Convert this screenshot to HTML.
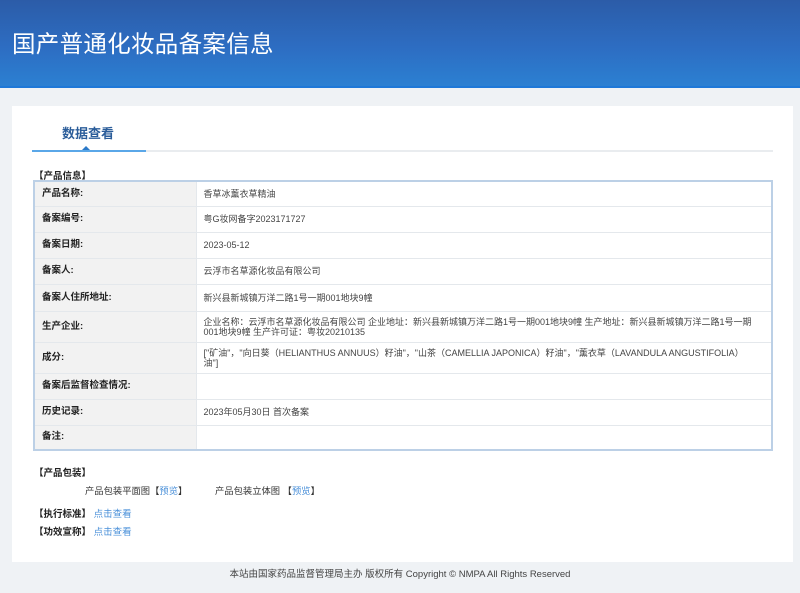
<!DOCTYPE html>
<html><head><meta charset="utf-8"><style>
*{margin:0;padding:0;box-sizing:border-box}
body{width:800px;height:593px;background:#eff2f5;font-family:"Liberation Sans","Noto Sans CJK SC",sans-serif;font-size:9px;color:#333;position:relative;overflow:hidden}
.hd{position:absolute;left:0;top:0;width:800px;height:88px;background:linear-gradient(180deg,#2c5ca8 0%,#2d6dc2 55%,#2c80d2 100%);border-bottom:2px solid #1e78d8}
.hd h1{position:absolute;left:12px;top:25px;font-size:23.5px;font-weight:normal;color:#fff;letter-spacing:0.3px}
.panel{position:absolute;left:12px;top:106px;width:781px;height:456px;background:#fff}
.tab{position:absolute;left:62px;top:123px;font-size:13px;font-weight:bold;color:#2b5d9a}
.tl{position:absolute;left:32px;top:150px;width:741px;height:2px;background:#e9ecef}
.tla{position:absolute;left:32px;top:150px;width:114px;height:2px;background:#5aa7e8}
.tri{position:absolute;left:82px;top:146px;width:0;height:0;border-left:4px solid transparent;border-right:4px solid transparent;border-bottom:4px solid #2b79c8}
.sec{position:absolute;font-weight:bold;color:#222;font-size:9.5px}
table{position:absolute;left:33px;top:180px;width:740px;border-collapse:collapse;border:2px solid #bcd0e6;table-layout:fixed}
td{border-bottom:1px solid #e4e8ec;padding:0 7px;vertical-align:middle;line-height:10px}
td.l{width:162px;background:#f2f2f2;font-weight:bold;font-size:9.5px;color:#222;border-right:1px solid #e4e8ec}
td.v{padding-left:7px;color:#444;font-size:9px;white-space:nowrap;overflow:hidden}
a{color:#4a90d9;text-decoration:none}
.ft{position:absolute;top:566px;left:0;width:800px;text-align:center;font-size:9.5px;color:#444}
</style></head><body>
<div class="hd"><h1>国产普通化妆品备案信息</h1></div>
<div class="panel"></div>
<div class="tab">数据查看</div>
<div class="tl"></div><div class="tla"></div><div class="tri"></div>
<div class="sec" style="left:34px;top:168px">【产品信息】</div>
<table>
<tr style="height:25px"><td class="l">产品名称:</td><td class="v">香草冰薰衣草精油</td></tr>
<tr style="height:26px"><td class="l">备案编号:</td><td class="v">粤G妆网备字2023171727</td></tr>
<tr style="height:26px"><td class="l">备案日期:</td><td class="v">2023-05-12</td></tr>
<tr style="height:26px"><td class="l">备案人:</td><td class="v">云浮市名草源化妆品有限公司</td></tr>
<tr style="height:27px"><td class="l">备案人住所地址:</td><td class="v">新兴县新城镇万洋二路1号一期001地块9幢</td></tr>
<tr style="height:31px"><td class="l">生产企业:</td><td class="v">企业名称：云浮市名草源化妆品有限公司 企业地址：新兴县新城镇万洋二路1号一期001地块9幢 生产地址：新兴县新城镇万洋二路1号一期<br>001地块9幢 生产许可证：粤妆20210135</td></tr>
<tr style="height:31px"><td class="l">成分:</td><td class="v">["矿油"，"向日葵（HELIANTHUS ANNUUS）籽油"，"山茶（CAMELLIA JAPONICA）籽油"，"薰衣草（LAVANDULA ANGUSTIFOLIA）<br>油"]</td></tr>
<tr style="height:26px"><td class="l">备案后监督检查情况:</td><td class="v"></td></tr>
<tr style="height:26px"><td class="l">历史记录:</td><td class="v">2023年05月30日 首次备案</td></tr>
<tr style="height:25px"><td class="l">备注:</td><td class="v"></td></tr>
</table>
<div class="sec" style="left:34px;top:465px">【产品包装】</div>
<div style="position:absolute;left:85px;top:483px;font-size:9.3px">产品包装平面图【<a>预览</a>】</div>
<div style="position:absolute;left:215px;top:483px;font-size:9.3px">产品包装立体图 【<a>预览</a>】</div>
<div class="sec" style="left:34px;top:506px">【执行标准】 <a style="font-weight:normal">点击查看</a></div>
<div class="sec" style="left:34px;top:524px">【功效宣称】 <a style="font-weight:normal">点击查看</a></div>
<div class="ft">本站由国家药品监督管理局主办 版权所有 Copyright © NMPA All Rights Reserved</div>
</body></html>
